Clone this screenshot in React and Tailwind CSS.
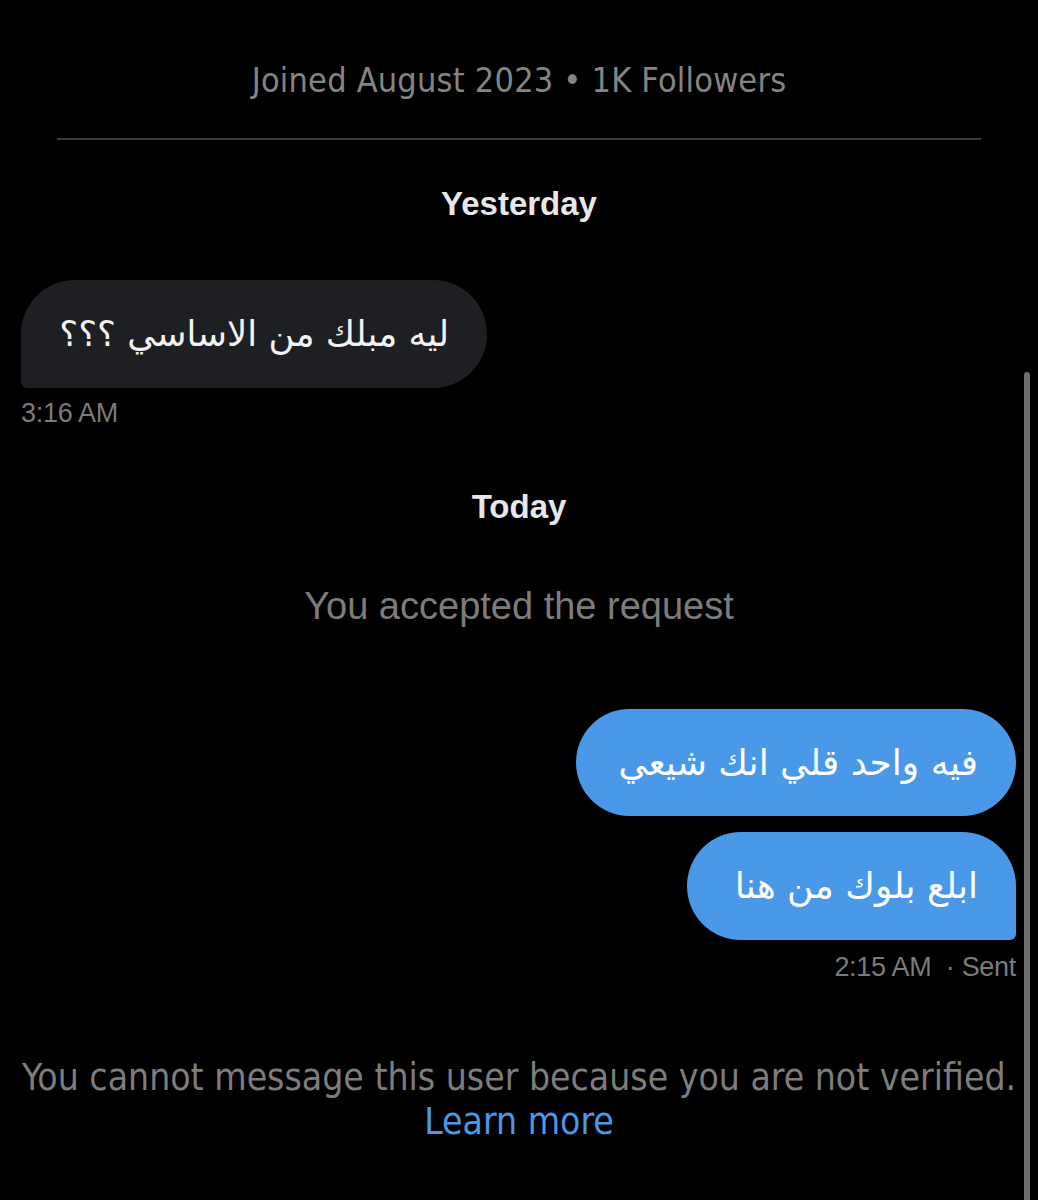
export default function App() {
  const sans = { fontFamily: '"Liberation Sans", "DejaVu Sans", sans-serif' };
  return (
    <div className="relative w-[1038px] h-[1200px] overflow-hidden bg-black text-white" style={sans}>
      <div className="flex flex-col">
        <div className="h-[58px]" />
        <div className="text-center text-[34px] leading-[44px] text-[#848484] tracking-[0.2px] font-['DejaVu_Sans_Condensed',sans-serif]">
          Joined August 2023 • 1K Followers
        </div>
        <div className="mx-[57px] mt-[36px] h-[2px] bg-[#3a3a3c]" />
        <div className="mt-[44px] text-center text-[33px] leading-[40px] font-bold text-[#e7e7e7]">
          Yesterday
        </div>

        <div className="mt-[56px] px-[21px] flex flex-col items-start">
          <div
            dir="rtl"
            className="h-[108px] w-[466px] flex items-center pr-[38px] rounded-[54px] rounded-bl-[6px] bg-[#1e1f22] text-[35.5px] text-[#f2f2f2] font-['DejaVu_Sans',sans-serif]"
          >
            ليه مبلك من الاساسي ؟؟؟
          </div>
          <div className="mt-[10px] text-[27px] leading-[30px] text-[#7b7b7b] tracking-[-0.3px]">3:16 AM</div>
        </div>

        <div className="mt-[59px] text-center text-[33px] leading-[40px] font-bold text-[#e7e7e7]">
          Today
        </div>
        <div className="mt-[59px] text-center text-[38px] leading-[40px] text-[#7c7c7c]">
          You accepted the request
        </div>

        <div className="mt-[83px] pr-[22px] flex flex-col items-end gap-[16px]">
          <div
            dir="rtl"
            className="h-[107px] w-[440px] flex items-center pr-[38px] rounded-[54px] bg-[#4a98e8] text-[36px] text-white font-['DejaVu_Sans',sans-serif]"
          >
            فيه واحد قلي انك شيعي
          </div>
          <div
            dir="rtl"
            className="h-[108px] w-[329px] flex items-center pr-[38px] rounded-[54px] rounded-br-[6px] bg-[#4a98e8] text-[36px] text-white font-['DejaVu_Sans',sans-serif]"
          >
            ابلع بلوك من هنا
          </div>
        </div>
        <div className="mt-[12px] pr-[22px] text-right text-[27px] leading-[30px] text-[#7b7b7b] tracking-[-0.3px]">
          2:15 AM &nbsp;· Sent
        </div>

        <div className="mt-[74px] text-center text-[37px] leading-[44px] text-[#7d7d7d] font-['DejaVu_Sans_Condensed',sans-serif]">
          You cannot message this user because you are not verified.
        </div>
        <div className="text-center text-[37px] leading-[44px] text-[#4a98e8] font-['DejaVu_Sans_Condensed',sans-serif]">
          Learn more
        </div>
      </div>
      <div className="absolute left-[1024px] top-[372px] w-[6px] h-[840px] rounded-full bg-[#6e6e6e]" />
    </div>
  );
}
